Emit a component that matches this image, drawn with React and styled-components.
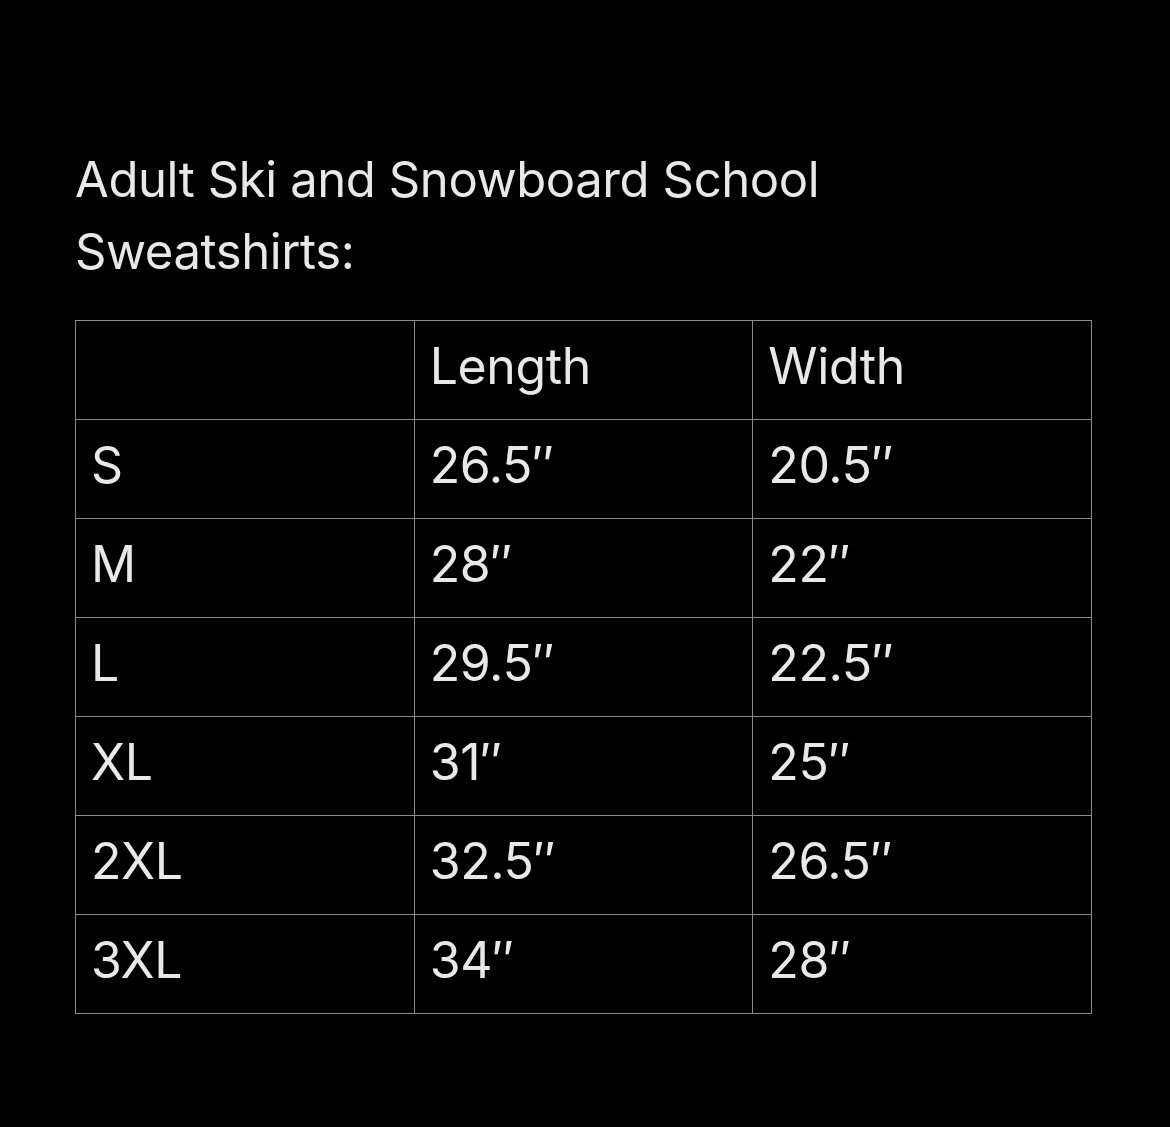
import React from 'react';
import styled, { createGlobalStyle } from 'styled-components';

const rows = [
  ['S', '26.5″', '20.5″'],
  ['M', '28″', '22″'],
  ['L', '29.5″', '22.5″'],
  ['XL', '31″', '25″'],
  ['2XL', '32.5″', '26.5″'],
  ['3XL', '34″', '28″'],
];

const App = () => {
  return (
    <>
      <GlobalStyle />
      <Page>
        <Title>
          Adult Ski and Snowboard School
          <br />
          Sweatshirts:
        </Title>
        <SizeTable>
          <thead>
            <tr>
              <Cell as="th"></Cell>
              <Cell as="th">Length</Cell>
              <Cell as="th">Width</Cell>
            </tr>
          </thead>
          <tbody>
            {rows.map((r) => (
              <tr key={r[0]}>
                {r.map((v, i) => (
                  <Cell key={i}>{v}</Cell>
                ))}
              </tr>
            ))}
          </tbody>
        </SizeTable>
      </Page>
    </>
  );
};

export default App;

/* --- Styled Components --- */

const GlobalStyle = createGlobalStyle`
  html, body {
    margin: 0;
    padding: 0;
    background: #000;
  }
  body {
    font-family: Inter, 'Noto Sans', sans-serif;
    color: #e8e8e8;
  }
`;

const Page = styled.div`
  width: 1170px;
  height: 1127px;
  box-sizing: border-box;
  padding: 144px 0 0 75px;
  background: #000;
`;

const Title = styled.h1`
  margin: 0 0 32px 0;
  font-size: 49px;
  line-height: 72px;
  font-weight: 400;
  letter-spacing: -0.4px;
  color: #e8e8e8;
`;

const SizeTable = styled.table`
  width: 1017px;
  border-collapse: collapse;
  table-layout: fixed;
`;

const Cell = styled.td`
  height: 99px;
  box-sizing: border-box;
  padding: 0 0 8px 15px;
  border: 1px solid #8a8a8a;
  text-align: left;
  vertical-align: middle;
  font-size: 50px;
  font-weight: 400;
  letter-spacing: -0.4px;
  color: #e8e8e8;
  white-space: nowrap;
`;
